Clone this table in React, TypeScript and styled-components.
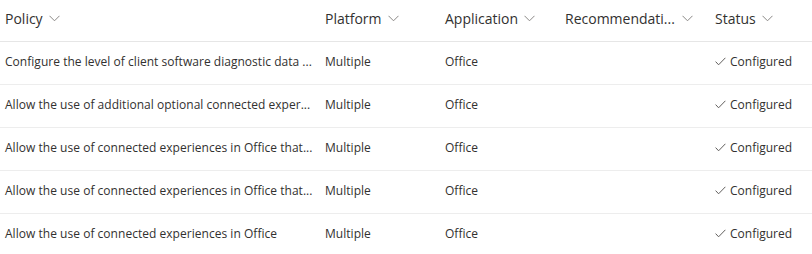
import React from "react";
import styled, { createGlobalStyle } from "styled-components";

const GlobalStyle = createGlobalStyle`
  body {
    margin: 0;
    background: #ffffff;
    font-family: "Segoe UI", "Open Sans", "Noto Sans", sans-serif;
    color: #323130;
  }
`;

const Table = styled.div`
  width: 812px;
`;

const Row = styled.div<{ $header?: boolean }>`
  display: grid;
  grid-template-columns: 320px 120px 120px 150px 1fr;
  height: ${(p) => (p.$header ? "41px" : "42px")};
  border-bottom: 1px solid ${(p) => (p.$header ? "#e6e6e6" : "#ededed")};
  align-items: center;
`;

const HeaderCell = styled.div<{ $spread?: boolean }>`
  display: flex;
  align-items: center;
  justify-content: ${(p) => (p.$spread ? "space-between" : "flex-start")};
  gap: 6px;
  padding: 0 ${(p) => (p.$spread ? "17px" : "0")} 4px 5px;
  font-size: 14px;
  color: #323130;
  white-space: nowrap;
`;

const Cell = styled.div`
  padding: 0 0 4px 5px;
  font-size: 12px;
  letter-spacing: 0.03px;
  color: #323130;
  white-space: nowrap;
  overflow: hidden;
`;

const StatusCell = styled(Cell)`
  display: flex;
  align-items: center;
  gap: 4px;
  padding-left: 5px;
  letter-spacing: 0;
`;

const Chevron = () => (
  <svg width="11" height="7" viewBox="0 0 11 7" fill="none">
    <path d="M0.5 0.8 L5.5 5.8 L10.5 0.8" stroke="#8a8886" strokeWidth="1" />
  </svg>
);

const Check = () => (
  <svg width="11" height="9" viewBox="0 0 11 9" fill="none">
    <path d="M0.6 4.6 L3.6 7.8 L10.4 0.8" stroke="#605e5c" strokeWidth="1" />
  </svg>
);

const rows = [
  "Configure the level of client software diagnostic data ...",
  "Allow the use of additional optional connected exper...",
  "Allow the use of connected experiences in Office that...",
  "Allow the use of connected experiences in Office that...",
  "Allow the use of connected experiences in Office",
];

export default function App() {
  return (
    <>
      <GlobalStyle />
      <Table>
        <Row $header>
          <HeaderCell>
            Policy <Chevron />
          </HeaderCell>
          <HeaderCell>
            Platform <Chevron />
          </HeaderCell>
          <HeaderCell>
            Application <Chevron />
          </HeaderCell>
          <HeaderCell $spread>
            Recommendati... <Chevron />
          </HeaderCell>
          <HeaderCell>
            Status <Chevron />
          </HeaderCell>
        </Row>
        {rows.map((policy, i) => (
          <Row key={i}>
            <Cell>{policy}</Cell>
            <Cell>Multiple</Cell>
            <Cell>Office</Cell>
            <Cell />
            <StatusCell>
              <Check />
              Configured
            </StatusCell>
          </Row>
        ))}
      </Table>
    </>
  );
}
